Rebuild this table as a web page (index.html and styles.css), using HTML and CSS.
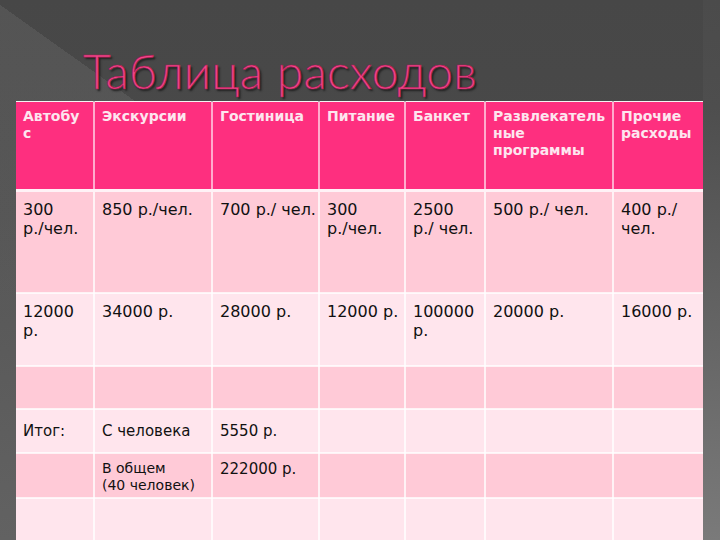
FILE: index.html
```html
<!DOCTYPE html>
<html lang="ru">
<head>
<meta charset="utf-8">
<title>Таблица расходов</title>
<link rel="stylesheet" href="styles.css">
</head>
<body>
<div class="slide">
  <h1 class="title">Таблица расходов</h1>
  <table class="costs">
    <colgroup>
      <col class="c1"><col class="c2"><col class="c3"><col class="c4"><col class="c5"><col class="c6"><col class="c7">
    </colgroup>
    <tr class="head">
      <th>Автобу<br>с</th>
      <th>Экскурсии</th>
      <th>Гостиница</th>
      <th>Питание</th>
      <th>Банкет</th>
      <th>Развлекатель<br>ные<br>программы</th>
      <th>Прочие<br>расходы</th>
    </tr>
    <tr class="odd r1">
      <td>300<br>р./чел.</td>
      <td>850 р./чел.</td>
      <td>700 р./ чел.</td>
      <td>300<br>р./чел.</td>
      <td>2500<br>р./ чел.</td>
      <td>500 р./ чел.</td>
      <td>400 р./<br>чел.</td>
    </tr>
    <tr class="even r2">
      <td>12000<br>р.</td>
      <td>34000 р.</td>
      <td>28000 р.</td>
      <td>12000 р.</td>
      <td>100000<br>р.</td>
      <td>20000 р.</td>
      <td>16000 р.</td>
    </tr>
    <tr class="odd r3">
      <td></td><td></td><td></td><td></td><td></td><td></td><td></td>
    </tr>
    <tr class="even r4">
      <td>Итог:</td>
      <td>С человека</td>
      <td>5550 р.</td>
      <td></td><td></td><td></td><td></td>
    </tr>
    <tr class="odd r5">
      <td></td>
      <td class="small">В общем<br>(40 человек)</td>
      <td>222000 р.</td>
      <td></td><td></td><td></td><td></td>
    </tr>
    <tr class="even r6">
      <td></td><td></td><td></td><td></td><td></td><td></td><td></td>
    </tr>
  </table>
</div>
</body>
</html>
```

FILE: styles.css
```css
html, body {
  margin: 0;
  padding: 0;
}
body {
  width: 720px;
  height: 540px;
  overflow: hidden;
  background-color: #484848;
  background-image:
    linear-gradient(180deg, #4b4b4b 0%, #4e4e4e 20%, #646464 60%, #7a7a7a 100%),
    linear-gradient(215.5deg, rgba(0,0,0,0) 49.2%, rgba(255,255,255,0.07) 49.2%),
    linear-gradient(180deg, #474747 0%, #4a4a4a 40%, #565656 100%);
  background-size: 17px 100%, 100% 100%, 100% 100%;
  background-position: right top, 0 0, 0 0;
  background-repeat: no-repeat;
  font-family: "DejaVu Sans", "Liberation Sans", sans-serif;
}
.slide {
  display: flex;
  flex-direction: column;
}
.title {
  margin: 0;
  box-sizing: border-box;
  height: 101px;
  padding: 47px 0 0 83px;
  font-family: Lato, "DejaVu Sans", sans-serif;
  font-weight: 300;
  font-size: 48px;
  line-height: 48px;
  letter-spacing: 0.3px;
  color: #f2468a;
  -webkit-text-stroke: 0.6px #a8184f;
  text-shadow: 2px 2px 2px #1e1e1e;
  white-space: nowrap;
}
.costs {
  margin-left: 16px;
  width: 687px;
  table-layout: fixed;
  border-collapse: collapse;
  border-spacing: 0;
}
.c1 { width: 78px; }
.c2 { width: 118px; }
.c3 { width: 107px; }
.c4 { width: 86px; }
.c5 { width: 80px; }
.c6 { width: 128px; }
.c7 { width: 90px; }

.costs th, .costs td {
  border: 2px solid rgba(255,255,255,0.75);
  vertical-align: top;
  text-align: left;
  white-space: nowrap;
  overflow: visible;
  padding: 0 0 0 7px;
}
.costs tr:first-child th { border-top: 1px solid #f4f4f4; }
.costs th:first-child, .costs td:first-child { border-left: 0; }
.costs th:last-child, .costs td:last-child { border-right: 0; }

.head th {
  background: #fe2f7f;
  color: #fde6ef;
  font-weight: bold;
  font-size: 14px;
  line-height: 17px;
  height: 89px;
  box-sizing: border-box;
  padding-top: 6px;
  border-left-color: rgba(255,255,255,0.6);
  border-right-color: rgba(255,255,255,0.6);
  border-bottom: 3px solid #fff2f6;
}
.odd td { background: #ffcad7; }
.even td { background: #ffe5ed; }
.costs td {
  color: #111;
  font-size: 16px;
  line-height: 19px;
  box-sizing: border-box;
  padding-top: 8px;
}
.r1 td { height: 102px; }
.r2 td { height: 73px; }
.r3 td { height: 43px; }
.r4 td { height: 44px; padding-top: 12px; font-size: 15px; }
.r5 td { height: 45px; padding-top: 6px; font-size: 15px; }
.r5 td.small { font-size: 14px; line-height: 17px; }
.r6 td { height: 50px; }
```
